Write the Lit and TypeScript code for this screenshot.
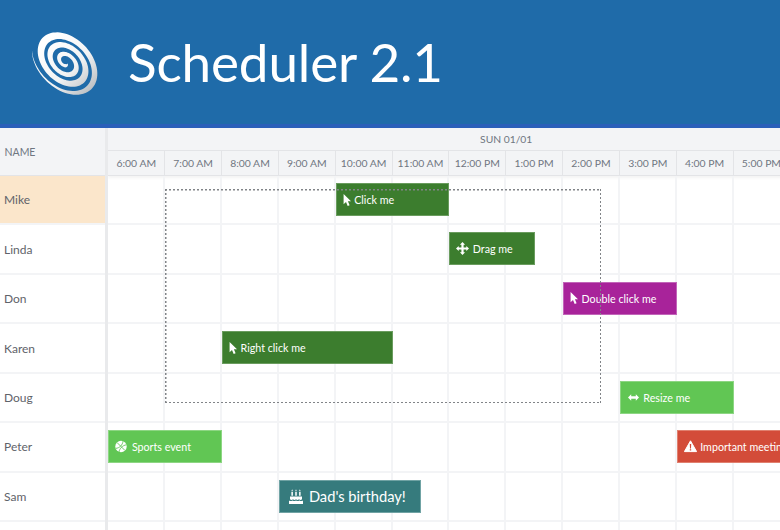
import { LitElement, html, css, svg } from "lit";
import { customElement } from "lit/decorators.js";

const COL = 56.83;
const ROW = 49.45;
const times = ["6:00 AM","7:00 AM","8:00 AM","9:00 AM","10:00 AM","11:00 AM","12:00 PM","1:00 PM","2:00 PM","3:00 PM","4:00 PM","5:00 PM","6:00 PM","7:00 PM"];
const names = ["Mike","Linda","Don","Karen","Doug","Peter","Sam",""];

type Icon = { w: number; h: number; body: unknown };
const cursor: Icon = { w: 8, h: 12, body: svg`<path d="M.6 0v10.2l2.4-2.2 1.7 4 1.9-.8-1.7-3.9H8z" fill="#fff"/>` };
const move: Icon = { w: 13, h: 13, body: svg`<path d="M6.5 0 3.9 2.7h1.5v2.7H2.7V3.9L0 6.5l2.7 2.6V7.6h2.7v2.7H3.9L6.5 13l2.6-2.7H7.6V7.6h2.7v1.5L13 6.5l-2.7-2.6v1.5H7.6V2.7h1.5z" fill="#fff"/>` };
const resize: Icon = { w: 13, h: 13, body: svg`<path d="M1 6.5 4.2 3.2v2.1h4.6V3.2L12 6.5 8.8 9.8V7.7H4.2v2.1z" fill="#fff"/>` };
const ball: Icon = { w: 13, h: 13, body: svg`<circle cx="6" cy="6.5" r="5.7" fill="#fff"/><path d="M.8 8.4C4.6 8 7.6 5 8 1.2M4 12C4.4 8.6 7.8 5.2 11.4 4.8M2 2.5l8 8" stroke="#61c654" stroke-width=".9" fill="none"/>` };
const warn: Icon = { w: 13, h: 13, body: svg`<path d="M6.5 .8 12.6 11.6H.4z" fill="#fff" stroke="#fff" stroke-linejoin="round"/><path d="M5.8 4h1.4l-.2 4.4H6zM5.8 9.2h1.4v1.4H5.8z" fill="#d34c39"/>` };
const cake: Icon = { w: 14, h: 15, body: svg`<path d="M1 7.4h12v2.8c-1 1-2 1-3 0-1 1-2 1-3 0-1 1-2 1-3 0-1 1-2 1-3 0zM0 11.4c1.100.7 2.300.7 3.500 0 1.200.7 2.300.7 3.500 0 1.200.7 2.300.7 3.500 0 1.200.7 2.400.7 3.500 0V15H0zM2.400 3h1.500v3.800H2.400zM6.250 3h1.500v3.800h-1.500zM10.100 3h1.500v3.800h-1.500zM3.150 .3l.8 1.900H2.350zM7 .3l.8 1.900H6.200zM10.850 .3l.8 1.900h-1.600z" fill="#fff"/>` };

type Ev = { row: number; start: number; span: number; text: string; cls: string; icon: Icon; big?: boolean };
const events: Ev[] = [
  { row: 0, start: 4, span: 2, text: "Click me", cls: "dark", icon: cursor },
  { row: 1, start: 6, span: 1.5, text: "Drag me", cls: "dark", icon: move },
  { row: 2, start: 8, span: 2, text: "Double click me", cls: "purple", icon: cursor },
  { row: 3, start: 2, span: 3, text: "Right click me", cls: "dark", icon: cursor },
  { row: 4, start: 9, span: 2, text: "Resize me", cls: "light", icon: resize },
  { row: 5, start: 0, span: 2, text: "Sports event", cls: "light", icon: ball },
  { row: 5, start: 10, span: 3, text: "Important meeting", cls: "red", icon: warn },
  { row: 6, start: 3, span: 2.5, text: "Dad's birthday!", cls: "teal", icon: cake, big: true },
];

function spiralPath(): string {
  const turns = 3.45;
  const steps = 260;
  const outer: string[] = [];
  const inner: string[] = [];
  const rot = (45 * Math.PI) / 180;
  const endTh = 2.55;
  const pt = (th: number, r: number) => {
    const x = r * Math.cos(th);
    const y = r * 0.7 * Math.sin(th);
    return `${(x * Math.cos(rot) - y * Math.sin(rot)).toFixed(2)} ${(x * Math.sin(rot) + y * Math.cos(rot)).toFixed(2)}`;
  };
  for (let i = 0; i <= steps; i++) {
    const t = i / steps;
    const th = endTh - (1 - t) * turns * 2 * Math.PI;
    const r = 2.5 + t * 36.5;
    const tailTaper = t > 0.74 ? Math.max(0.04, Math.cos(((t - 0.74) / 0.26) * Math.PI * 0.5)) : 1;
    const headTaper = Math.min(1, t / 0.06);
    const w = (4 + 5 * t) * tailTaper * headTaper;
    outer.push(pt(th, r + w * 0.5));
    inner.unshift(pt(th, r - w * 0.5));
  }
  return "M" + outer.join("L") + "L" + inner.join("L") + "Z";
}

@customElement("app-root")
export class AppRoot extends LitElement {
  static styles = css`
    :host { display: block; width: 780px; height: 530px; overflow: hidden; font-family: Lato, "Open Sans", sans-serif; background: #fff; }
    .banner { display: flex; align-items: center; gap: 30px; height: 124px; padding-left: 32px; background: #1f6ba9; border-bottom: 4px solid #2a5fb9; }
    .logo { width: 67px; height: 66px; flex: none; }
    h1 { margin: -2px 0 0 -1px; font-size: 53px; font-weight: 400; color: #fff; line-height: 1; letter-spacing: -0.15px; }
    .sched { display: flex; height: 402px; overflow: hidden; }
    .left { flex: none; width: 105.4px; border-right: 3px solid #e9eaec; }
    .lhead { height: 47px; display: flex; align-items: center; padding-left: 4.5px; background: #f3f4f6; color: #6f7681; font-size: 10.5px; border-bottom: 1px solid #e3e4e7; }
    .name { height: 49.45px; box-sizing: border-box; display: flex; align-items: center; padding-left: 4px; font-size: 12px; color: #5f636a; border-bottom: 2px solid #f3f4f6; }
    .name.sel { background: #fbe6cb; }
    .right { flex: 1; min-width: 0; overflow: hidden; position: relative; }
    .date { height: 23px; background: #f3f4f6; color: #6f7681; font-size: 10.3px; display: flex; align-items: center; justify-content: center; box-sizing: border-box; border-bottom: 1px solid #e3e4e7; width: ${COL * 14}px; }
    .times { display: flex; width: ${COL * 14}px; height: 24px; background: #f3f4f6; border-bottom: 1px solid #e3e4e7; box-shadow: 0 2px 3px rgba(0,0,0,.05); position: relative; }
    .time { flex: none; width: ${COL}px; box-sizing: border-box; display: flex; align-items: center; justify-content: center; font-size: 10.4px; color: #6f7681; border-right: 1px solid #e3e4e7; }
    .canvas { position: relative; width: ${COL * 14}px; }
    .row { display: flex; height: 49.45px; box-sizing: border-box; border-bottom: 2px solid #f3f4f6; }
    .cell { flex: none; width: ${COL}px; box-sizing: border-box; border-right: 2px solid #f3f4f6; }
    .ev { position: absolute; height: 33px; box-sizing: border-box; display: flex; align-items: center; gap: 3.5px; padding-left: 6px; color: #fff; font-size: 10.7px; white-space: nowrap; border: 1px solid; overflow: hidden; }
    .ev svg { flex: none; }
    .ev.big { font-size: 14.7px; gap: 6px; padding-left: 9px; }
    .dark { background: #3c7d2e; border-color: #6a9c5e; }
    .light { background: #61c654; border-color: #8dd683; }
    .purple { background: #a8239a; border-color: #c265b9; }
    .red { background: #d34c39; border-color: #e0806f; }
    .teal { background: #367b7d; border-color: #70a3a4; }
    .selection {
      position: absolute; left: 56.8px; top: 13px; width: 436px; height: 214px;
      --d: repeating-linear-gradient(90deg, #818488 0 2px, transparent 2px 4px);
      --v: repeating-linear-gradient(180deg, #818488 0 2px, transparent 2px 4px);
      background:
        var(--d) left top / 100% 1.5px no-repeat,
        var(--d) left bottom / 100% 1.5px no-repeat,
        var(--v) left top / 1.5px 100% no-repeat,
        var(--v) right top / 1.5px 100% no-repeat;
    }
  `;

  render() {
    return html`
      <div class="banner">
        <svg class="logo" viewBox="-33.5 -33 67 66">
          <defs>
            <linearGradient id="g" gradientUnits="userSpaceOnUse" x1="-20" y1="-20" x2="26" y2="30">
              <stop offset="0" stop-color="#ffffff"/>
              <stop offset=".55" stop-color="#f2f3f4"/>
              <stop offset="1" stop-color="#b9bdc1"/>
            </linearGradient>
          </defs>
          <path d=${spiralPath()} fill="url(#g)"/>
        </svg>
        <h1>Scheduler 2.1</h1>
      </div>
      <div class="sched">
        <div class="left">
          <div class="lhead">NAME</div>
          ${names.map((n, i) => html`<div class="name ${i === 0 ? "sel" : ""}">${n}</div>`)}
        </div>
        <div class="right">
          <div class="date">SUN 01/01</div>
          <div class="times">${times.map((t) => html`<div class="time">${t}</div>`)}</div>
          <div class="canvas">
            ${names.map(() => html`<div class="row">${times.map(() => html`<div class="cell"></div>`)}</div>`)}
            ${events.map((e) => html`
              <div class="ev ${e.cls} ${e.big ? "big" : ""}" style="left:${e.start * COL}px;width:${e.span * COL}px;top:${e.row * ROW + 7}px">
                <svg width=${e.icon.w} height=${e.icon.h} viewBox="0 0 ${e.icon.w} ${e.icon.h}">${e.icon.body}</svg><span>${e.text}</span>
              </div>`)}
            <div class="selection"></div>
          </div>
        </div>
      </div>
    `;
  }
}
